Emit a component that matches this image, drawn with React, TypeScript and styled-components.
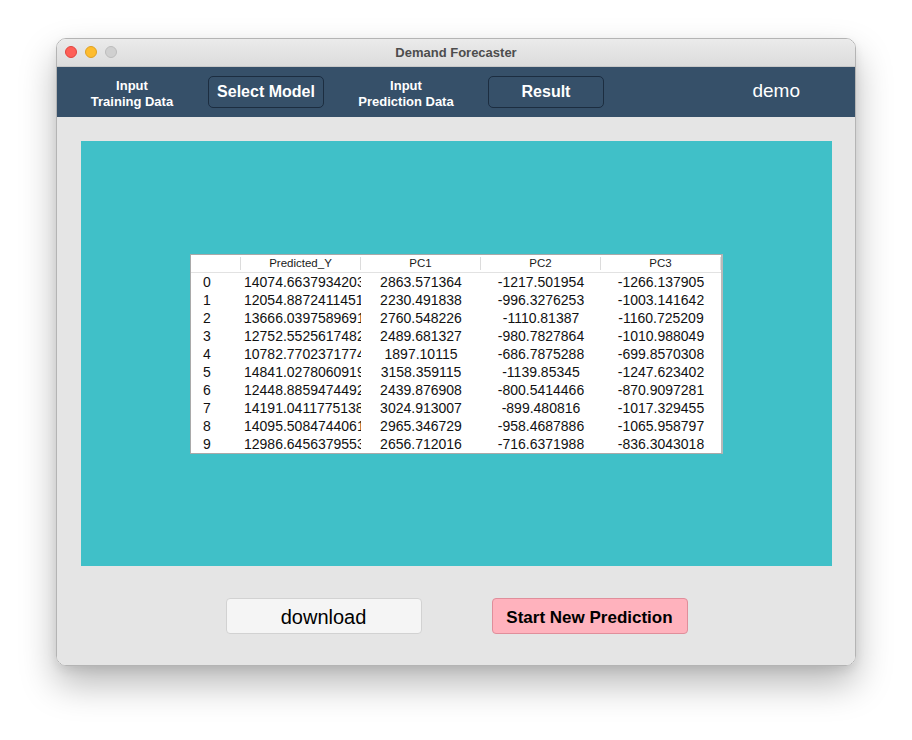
import styled, { createGlobalStyle } from 'styled-components'

const Global = createGlobalStyle`
  html, body {
    margin: 0;
    background: #ffffff;
    font-family: "Liberation Sans", Arial, sans-serif;
  }
`

const Desktop = styled.div`
  width: 912px;
  height: 740px;
  padding: 38px 0 0 56px;
  box-sizing: border-box;
`

const Window = styled.div`
  width: 800px;
  height: 628px;
  border-radius: 10px;
  border: 1px solid #b4b4b4;
  box-sizing: border-box;
  overflow: hidden;
  display: flex;
  flex-direction: column;
  box-shadow: 0 18px 36px rgba(0, 0, 0, 0.28), 0 4px 10px rgba(0, 0, 0, 0.08);
`

const TitleBar = styled.div`
  height: 27px;
  background: linear-gradient(#ebebeb, #dcdcdc);
  border-bottom: 1px solid #c8c8c8;
  display: flex;
  align-items: center;
  position: relative;
  justify-content: center;
`

const Lights = styled.div`
  position: absolute;
  left: 8px;
  top: 7px;
  display: flex;
  gap: 8px;
`

const Light = styled.span<{ $c: string; $b: string }>`
  width: 12px;
  height: 12px;
  border-radius: 50%;
  background: ${(p) => p.$c};
  box-sizing: border-box;
  border: 1px solid ${(p) => p.$b};
`

const Title = styled.div`
  font-size: 13px;
  font-weight: 700;
  color: #4d4d4d;
  padding-bottom: 1px;
`

const Nav = styled.nav`
  height: 50px;
  background: #365069;
  display: grid;
  grid-template-columns: 150px 118px 162px 118px 1fr;
  align-items: center;
  justify-items: center;
`

const NavLabel = styled.div`
  color: #ffffff;
  font-weight: 700;
  font-size: 13px;
  line-height: 16px;
  text-align: center;
  padding-top: 3px;
`

const NavButton = styled.button`
  width: 116px;
  height: 32px;
  background: #365069;
  border: 1px solid #1c2d40;
  border-radius: 5px;
  color: #ffffff;
  font-family: inherit;
  font-weight: 700;
  font-size: 16px;
  padding: 0;
`

const Brand = styled.div`
  justify-self: end;
  padding-right: 55px;
  color: #ffffff;
  font-size: 19px;
  padding-bottom: 2px;
`

const Content = styled.main`
  flex: 1;
  background: #e5e5e5;
  padding: 24px 23px 0 24px;
  display: flex;
  flex-direction: column;
`

const Panel = styled.section`
  height: 425px;
  background: #40c0c8;
  display: flex;
  align-items: center;
  justify-content: center;
  padding-top: 1px;
  box-sizing: border-box;
`

const Table = styled.div`
  background: #ffffff;
  border: 1px solid #a9a9a9;
  border-right: 2px solid #b9b9b9;
  width: 530px;
`

const HeadRow = styled.div`
  display: grid;
  grid-template-columns: 50px repeat(4, 120px);
  height: 17px;
  border-bottom: 1px solid #e2e2e2;
`

const HeadCell = styled.div`
  font-size: 11.5px;
  color: #1a1a1a;
  text-align: center;
  border-right: 1px solid #dcdcdc;
  margin: 2px 0;
  line-height: 13px;
`

const Row = styled.div`
  display: grid;
  grid-template-columns: 50px repeat(4, 120px);
  height: 18px;
  align-items: center;
`

const IndexCell = styled.div`
  font-size: 14px;
  padding-left: 12px;
  color: #111;
`

const Cell = styled.div`
  font-size: 14px;
  color: #111;
  text-align: center;
  white-space: nowrap;
  overflow: hidden;
  padding: 0 3px;
`

const Actions = styled.div`
  display: flex;
  justify-content: center;
  gap: 70px;
  padding-top: 32px;
`

const Action = styled.button<{ $primary?: boolean }>`
  width: 196px;
  height: 36px;
  border-radius: 4px;
  font-family: inherit;
  color: #000;
  border: 1px solid ${(p) => (p.$primary ? '#e08e9b' : '#d2d2d2')};
  background: ${(p) => (p.$primary ? '#ffb2bd' : '#f5f5f5')};
  font-size: ${(p) => (p.$primary ? '17px' : '20px')};
  font-weight: ${(p) => (p.$primary ? 700 : 400)};
  padding: 3px 0 0;
`

const rows = [
  ['14074.66379342037', '2863.571364', '-1217.501954', '-1266.137905'],
  ['12054.88724114512', '2230.491838', '-996.3276253', '-1003.141642'],
  ['13666.03975896912', '2760.548226', '-1110.81387', '-1160.725209'],
  ['12752.55256174823', '2489.681327', '-980.7827864', '-1010.988049'],
  ['10782.77023717741', '1897.10115', '-686.7875288', '-699.8570308'],
  ['14841.02780609193', '3158.359115', '-1139.85345', '-1247.623402'],
  ['12448.88594744921', '2439.876908', '-800.5414466', '-870.9097281'],
  ['14191.04117751384', '3024.913007', '-899.480816', '-1017.329455'],
  ['14095.50847440612', '2965.346729', '-958.4687886', '-1065.958797'],
  ['12986.64563795534', '2656.712016', '-716.6371988', '-836.3043018'],
]

export default function App() {
  return (
    <>
      <Global />
      <Desktop>
        <Window>
          <TitleBar>
            <Lights>
              <Light $c="#fe5f57" $b="#e0443e" />
              <Light $c="#febc2e" $b="#dea123" />
              <Light $c="#d0d0d0" $b="#bcbcbc" />
            </Lights>
            <Title>Demand Forecaster</Title>
          </TitleBar>
          <Nav>
            <NavLabel>Input<br />Training Data</NavLabel>
            <NavButton>Select Model</NavButton>
            <NavLabel>Input<br />Prediction Data</NavLabel>
            <NavButton>Result</NavButton>
            <Brand>demo</Brand>
          </Nav>
          <Content>
            <Panel>
              <Table>
                <HeadRow>
                  <HeadCell />
                  <HeadCell>Predicted_Y</HeadCell>
                  <HeadCell>PC1</HeadCell>
                  <HeadCell>PC2</HeadCell>
                  <HeadCell>PC3</HeadCell>
                </HeadRow>
                {rows.map((r, i) => (
                  <Row key={i}>
                    <IndexCell>{i}</IndexCell>
                    {r.map((v, j) => (
                      <Cell key={j}>{v}</Cell>
                    ))}
                  </Row>
                ))}
              </Table>
            </Panel>
            <Actions>
              <Action>download</Action>
              <Action $primary>Start New Prediction</Action>
            </Actions>
          </Content>
        </Window>
      </Desktop>
    </>
  )
}
